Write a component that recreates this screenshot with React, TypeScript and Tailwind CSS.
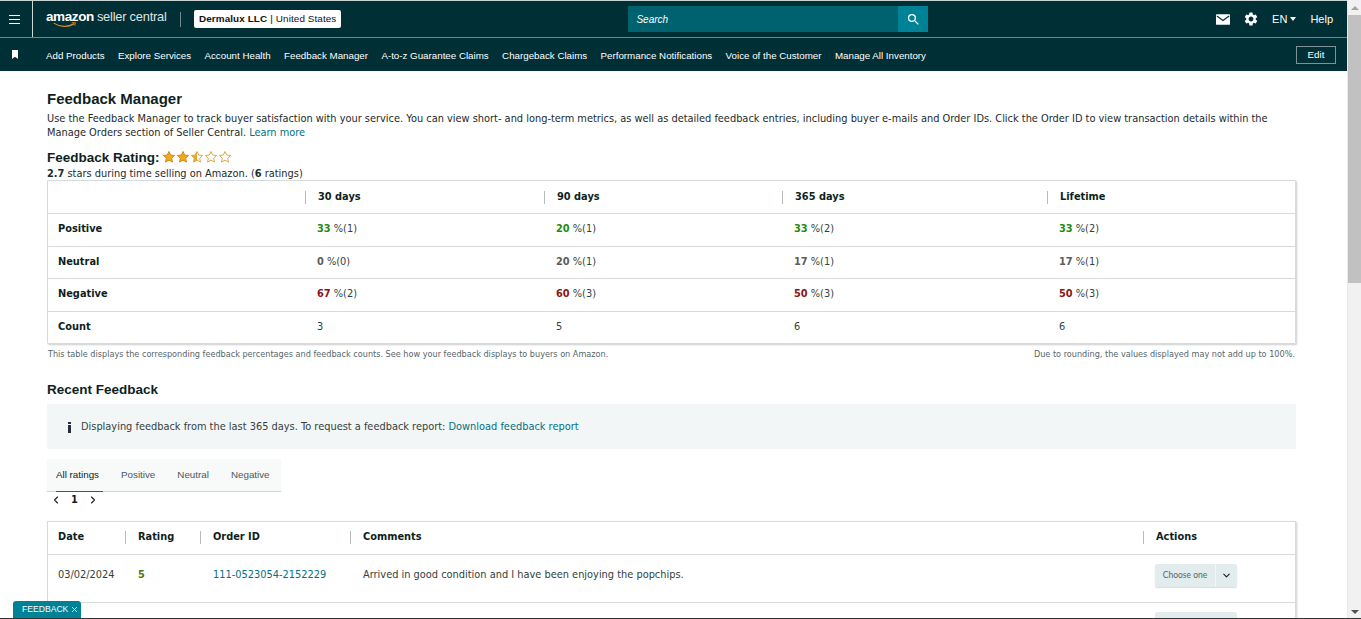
import { ChevronDown, ChevronLeft, ChevronRight, X } from "lucide-react"
import { MdSearch, MdSettings } from "react-icons/md"

const navItems = [
  "Add Products",
  "Explore Services",
  "Account Health",
  "Feedback Manager",
  "A-to-z Guarantee Claims",
  "Chargeback Claims",
  "Performance Notifications",
  "Voice of the Customer",
  "Manage All Inventory",
]

type Stat = { value: string; rest: string }

const ratingRows: { label: string; color: string; cells: Stat[] }[] = [
  {
    label: "Positive",
    color: "text-[#1f8a12]",
    cells: [
      { value: "33", rest: "%(1)" },
      { value: "20", rest: "%(1)" },
      { value: "33", rest: "%(2)" },
      { value: "33", rest: "%(2)" },
    ],
  },
  {
    label: "Neutral",
    color: "text-[#5c5c5c]",
    cells: [
      { value: "0", rest: "%(0)" },
      { value: "20", rest: "%(1)" },
      { value: "17", rest: "%(1)" },
      { value: "17", rest: "%(1)" },
    ],
  },
  {
    label: "Negative",
    color: "text-[#8a1414]",
    cells: [
      { value: "67", rest: "%(2)" },
      { value: "60", rest: "%(3)" },
      { value: "50", rest: "%(3)" },
      { value: "50", rest: "%(3)" },
    ],
  },
]

const starPath = "M12 2.5l2.9 6.2 6.7.8-5 4.6 1.4 6.6L12 17.4l-6 3.3 1.4-6.6-5-4.6 6.7-.8z"

function Star({ fill }: { fill: "full" | "half" | "none" }) {
  return (
    <svg viewBox="0 0 24 24" className="h-[14px] w-[14px] shrink-0">
      <defs>
        <linearGradient id="half-star">
          <stop offset="50%" stopColor="#f0a81c" />
          <stop offset="50%" stopColor="#ffffff" />
        </linearGradient>
      </defs>
      <path
        d={starPath}
        fill={fill === "full" ? "#f0a81c" : fill === "half" ? "url(#half-star)" : "#ffffff"}
        stroke={fill === "full" ? "#d08a10" : "#d9a441"}
        strokeWidth="1.6"
      />
    </svg>
  )
}

function HeadCell({ label, className }: { label: string; className: string }) {
  return (
    <div className={`flex items-center ${className}`}>
      <span className="mr-[12px] h-[13px] w-px bg-[#b5bcbc]" />
      <span className="font-bold text-[#0f1f21]">{label}</span>
    </div>
  )
}

export default function App() {
  return (
    <div className="relative flex h-[619px] overflow-hidden bg-white font-['DejaVu_Sans',Verdana,sans-serif] text-[9.82px] text-[#0f1111]">
      <div className="flex w-[1347px] shrink-0 flex-col overflow-hidden">
        {/* Top bar */}
        <header className="flex h-[38px] shrink-0 items-center border-t border-b border-t-[#c9d2d2] border-b-[#6f8688] bg-[#002f36] font-['Liberation_Sans',Arial,sans-serif] text-white">
          <div className="flex h-full w-[33px] shrink-0 flex-col items-start justify-center gap-[3px] border-r border-[#cfd8d8] pl-[9px]">
            <span className="h-px w-[11px] bg-white" />
            <span className="h-px w-[11px] bg-white" />
            <span className="h-px w-[11px] bg-white" />
          </div>
          <div className="relative ml-[13px] flex w-[121px] items-baseline whitespace-nowrap pb-[3px]">
            <span className="text-[13.5px] font-bold tracking-[-0.4px]">amazon</span>
            <span className="ml-[3px] text-[12.8px] tracking-[-0.2px] text-[#dfe5e5]">seller central</span>
            <svg viewBox="0 0 32 8" className="absolute left-[6px] top-[15px] h-[6px] w-[26px]">
              <path d="M1 1.5c8 5.5 19 5.5 27 1" fill="none" stroke="#e88b1a" strokeWidth="1.6" />
              <path d="M25 1h5l-1 4" fill="none" stroke="#e88b1a" strokeWidth="1.2" />
            </svg>
          </div>
          <span className="ml-[13px] h-[15px] w-px bg-[#71898b]" />
          <div className="ml-[13px] flex h-[18px] items-center rounded-[2px] bg-white px-[5px] text-[9.9px] tracking-[0.1px] text-[#0f1111]">
            <span className="font-bold">Dermalux LLC</span>
            <span className="mx-[3px]">|</span>
            <span>United States</span>
          </div>
          <div className="ml-[287px] flex h-[26px] w-[300px] items-center bg-[#00616f]">
            <span className="flex-1 pl-[8px] text-[10px] italic text-white">Search</span>
            <div className="flex h-[26px] w-[30px] items-center justify-center bg-[#008296]">
              <MdSearch size={15} />
            </div>
          </div>
          <div className="ml-auto flex items-center pr-[14px] text-[11px]">
            <svg viewBox="0 0 16 12" className="h-[11px] w-[14px]">
              <rect width="16" height="12" rx="1" fill="#ffffff" />
              <path d="M1 2l7 5 7-5" fill="none" stroke="#002f36" strokeWidth="1.4" />
            </svg>
            <MdSettings size={16} className="ml-[13px]" />
            <span className="ml-[13px]">EN</span>
            <span className="ml-[3px] h-0 w-0 border-x-[3px] border-t-[4px] border-x-transparent border-t-white" />
            <span className="ml-[14px]">Help</span>
          </div>
        </header>

        {/* Shortcut bar */}
        <nav className="flex h-[33px] shrink-0 items-center bg-[#002f36] pr-[11px] pt-[3px] font-['Liberation_Sans',Arial,sans-serif] text-[9.75px] text-white">
          <svg viewBox="0 0 10 12" className="ml-[11px] h-[9px] w-[8px] shrink-0 -translate-y-[2px]">
            <path d="M1 0h8v12L5 9l-4 3z" fill="#ffffff" />
          </svg>
          <div className="ml-[27px] flex gap-[13.4px] whitespace-nowrap">
            {navItems.map((item) => (
              <span key={item}>{item}</span>
            ))}
          </div>
          <button className="ml-auto flex h-[18px] w-[40px] -translate-y-[1px] items-center justify-center border border-[#7f9294] text-[9.8px]">
            Edit
          </button>
        </nav>

        <main className="flex-1 overflow-hidden pl-[47px] pr-[51px]">
          <h1 className="mt-[19px] font-['Liberation_Sans',Arial,sans-serif] text-[15px] font-bold leading-[18px] text-[#0f1f21]">
            Feedback Manager
          </h1>
          <p className="mt-[4px] leading-[14px] text-[#1d2b2d]">
            Use the Feedback Manager to track buyer satisfaction with your service. You can view short- and long-term metrics, as well as detailed feedback entries, including buyer e-mails and Order IDs. Click the Order ID to view transaction details within the Manage Orders section of Seller Central.{" "}
            <span className="text-[#007185]">Learn more</span>
          </p>

          <div className="mt-[9px] flex h-[18px] items-center font-['Liberation_Sans',Arial,sans-serif] text-[13.5px] font-bold text-[#0f1f21]">
            <span>Feedback Rating:</span>
            <div className="ml-[2px] mb-[2px] flex">
              <Star fill="full" />
              <Star fill="full" />
              <Star fill="half" />
              <Star fill="none" />
              <Star fill="none" />
            </div>
          </div>
          <p className="h-[13px] leading-[14px] text-[#1d2b2d]">
            <b>2.7</b> stars during time selling on Amazon. (<b>6</b> ratings)
          </p>

          {/* Rating table */}
          <div className="rounded-[1px] border border-[#d5dbdb] shadow-[1px_1px_2px_rgba(0,0,0,0.2)]">
            <div className="grid h-[32px] grid-cols-[257px_239px_238px_265px_1fr] items-center">
              <span />
              <HeadCell label="30 days" className="" />
              <HeadCell label="90 days" className="" />
              <HeadCell label="365 days" className="" />
              <HeadCell label="Lifetime" className="" />
            </div>
            {ratingRows.map((row) => (
              <div
                key={row.label}
                className="grid h-[32.5px] grid-cols-[257px_239px_238px_265px_1fr] items-center border-t border-[#d5dbdb]"
              >
                <span className="pl-[10px] font-bold text-[#0f1f21]">{row.label}</span>
                {row.cells.map((cell, i) => (
                  <span key={i} className="pl-[12px] text-[#333f41]">
                    <b className={row.color}>{cell.value}</b> {cell.rest}
                  </span>
                ))}
              </div>
            ))}
            <div className="grid h-[32px] grid-cols-[257px_239px_238px_265px_1fr] items-center border-t border-[#d5dbdb]">
              <span className="pl-[10px] font-bold text-[#0f1f21]">Count</span>
              {["3", "5", "6", "6"].map((count, i) => (
                <span key={i} className="pl-[12px] text-[#333f41]">
                  {count}
                </span>
              ))}
            </div>
          </div>

          <div className="mt-[5px] flex h-[12px] items-center justify-between px-[1px] text-[8.15px] text-[#56666a]">
            <span>
              This table displays the corresponding feedback percentages and feedback counts. See how your feedback displays to buyers on Amazon.
            </span>
            <span>Due to rounding, the values displayed may not add up to 100%.</span>
          </div>

          <h2 className="mt-[20px] font-['Liberation_Sans',Arial,sans-serif] text-[13.5px] font-bold leading-[18px] text-[#0f1f21]">
            Recent Feedback
          </h2>

          {/* Info banner */}
          <div className="mt-[5px] flex h-[45px] items-center bg-[#f3f6f6] pl-[20px] pt-[2px]">
            <span className="flex h-[11px] w-[4px] flex-col items-center">
              <span className="h-[2px] w-[3px] bg-[#232f3e]" />
              <span className="mt-[1px] h-[8px] w-[3px] bg-[#232f3e]" />
            </span>
            <span className="ml-[10px] text-[#333f41]">
              Displaying feedback from the last 365 days. To request a feedback report:{" "}
              <span className="text-[#007185]">Download feedback report</span>
            </span>
          </div>

          {/* Tabs */}
          <div className="mt-[10px] flex h-[33px] w-[234px] items-end border-b border-[#cfd5d5] bg-[#f8f9f9] pl-[9px] font-['Liberation_Sans',Arial,sans-serif] text-[9.8px] text-[#4a5a5e]">
            <span className="-mb-px flex h-[31px] w-[47px] items-center border-b border-[#007185] font-medium text-[#0f1f21]">
              All ratings
            </span>
            <span className="ml-[18px] flex h-[31px] items-center">Positive</span>
            <span className="ml-[22px] flex h-[31px] items-center">Neutral</span>
            <span className="ml-[22px] flex h-[31px] items-center">Negative</span>
          </div>
          <div className="flex h-[17px] items-center pl-[3px] text-[#0f1f21]">
            <ChevronLeft size={12} strokeWidth={2.2} />
            <span className="ml-[9px] font-bold">1</span>
            <ChevronRight size={12} strokeWidth={2.2} className="ml-[9px]" />
          </div>

          {/* Feedback table */}
          <div className="mt-[12px] border border-[#d5dbdb] shadow-[1px_1px_2px_rgba(0,0,0,0.2)]">
            <div className="flex h-[32px] items-center">
              <span className="w-[77px] pl-[10px] font-bold text-[#0f1f21]">Date</span>
              <HeadCell label="Rating" className="w-[75px]" />
              <HeadCell label="Order ID" className="w-[150px]" />
              <HeadCell label="Comments" className="w-[793px]" />
              <HeadCell label="Actions" className="" />
            </div>
            <div className="flex h-[48px] items-center border-t border-[#d5dbdb] pb-[5px] text-[#333f41]">
              <span className="w-[90px] pl-[10px]">03/02/2024</span>
              <b className="w-[75px] text-[#4d7a12]">5</b>
              <span className="w-[150px] text-[#007185]">111-0523054-2152229</span>
              <span className="w-[792px]">Arrived in good condition and I have been enjoying the popchips.</span>
              <div className="flex h-[23px] w-[82px] items-center rounded-[2px] bg-[#e3ecec] font-['Lato',sans-serif] text-[8.5px] text-[#56666a] shadow-[0_1px_1px_rgba(0,0,0,0.15)]">
                <span className="flex-1 text-center">Choose one</span>
                <span className="flex h-full w-[22px] items-center justify-center border-l border-[#f3f6f6] text-[#0f1f21]">
                  <ChevronDown size={11} strokeWidth={2.4} />
                </span>
              </div>
            </div>
            <div className="flex h-[48px] border-t border-[#d5dbdb] pt-[9px]">
              <div className="ml-[1107px] h-[23px] w-[82px] rounded-[2px] bg-[#e3ecec]" />
            </div>
          </div>
        </main>
      </div>

      {/* Scrollbar */}
      <div className="flex w-[14px] shrink-0 flex-col items-center border-l border-[#e8e8e8] bg-[#f1f1f1]">
        <span className="mt-[6px] h-0 w-0 border-x-[4px] border-b-[4px] border-x-transparent border-b-[#a3a3a3]" />
        <div className="mt-[5px] h-[268px] w-full bg-[#c1c1c1]" />
        <span className="mb-[5px] mt-auto h-0 w-0 border-x-[4px] border-t-[4px] border-x-transparent border-t-[#505050]" />
      </div>

      {/* Feedback tab */}
      <div className="absolute bottom-[1px] left-[13px] flex h-[17px] w-[68px] items-center gap-[2px] rounded-t-[3px] bg-[#008296] pl-[9px] font-['Liberation_Sans',Arial,sans-serif] text-[8.6px] text-white">
        <span>FEEDBACK</span>
        <X size={9} strokeWidth={2} />
      </div>
      <div className="absolute inset-x-0 bottom-0 h-px bg-[#333]" />
    </div>
  )
}
